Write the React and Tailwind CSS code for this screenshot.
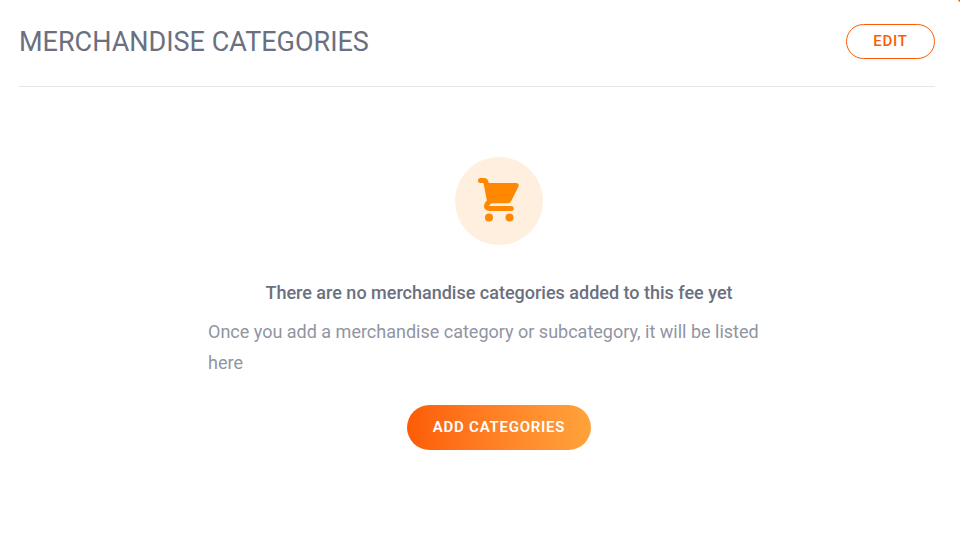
export default function App() {
  return (
    <main className="relative min-h-screen overflow-hidden bg-white pl-[19px] pr-[25px] pt-6 font-[Roboto,sans-serif]">
      <span className="absolute -top-1 -right-1 size-[6px] rounded-full bg-[#fc5c04]" aria-hidden="true" />
      <header className="flex items-start justify-between border-b border-[#e6e6e6] pb-[26px]">
        <h1 className="text-[27px] leading-9 text-[#6b7080]">MERCHANDISE CATEGORIES</h1>
        <button type="button" className="h-[35px] w-[89px] rounded-full border border-[#fc5c04] pb-px text-[15px] font-medium tracking-wider text-[#fc5c04]">
          EDIT
        </button>
      </header>
      <div className="pl-11 pt-[70px]">
        <section className="mx-auto flex max-w-[582px] flex-col items-center text-lg">
          <div className="flex size-[88px] items-center justify-center rounded-full bg-[#ffefdf]">
            <svg viewBox="0 0 48 48" className="size-12" fill="#ff8800" aria-hidden="true">
              <path
                d="M5.5 3.5H9Q10.7 3.5 11 5.5L14.5 24.5L12.2 27Q10.2 31.5 14.5 31.5H36.2"
                fill="none"
                stroke="#ff8800"
                strokeWidth="5"
                strokeLinecap="round"
                strokeLinejoin="round"
              />
              <path d="M11 6H41.5Q44.5 6.3 43.5 9.5L36.5 23.5Q35.3 26.2 32.5 26.2H16L13 28L12.5 22Z" />
              <circle cx="14" cy="40.5" r="4" />
              <circle cx="34.5" cy="40.5" r="4" />
            </svg>
          </div>
          <h2 className="mt-8 leading-[31px] font-medium text-[#6b7080]">There are no merchandise categories added to this fee yet</h2>
          <p className="mt-2 leading-[31px] text-[#9095a2]">Once you add a merchandise category or subcategory, it will be listed here</p>
          <button type="button" className="mt-[27px] h-[45px] w-[184px] rounded-full bg-linear-to-r from-[#fc5c04] to-[#ffa33b] text-[15px] font-semibold tracking-wider text-white">
            ADD CATEGORIES
          </button>
        </section>
      </div>
    </main>
  );
}
